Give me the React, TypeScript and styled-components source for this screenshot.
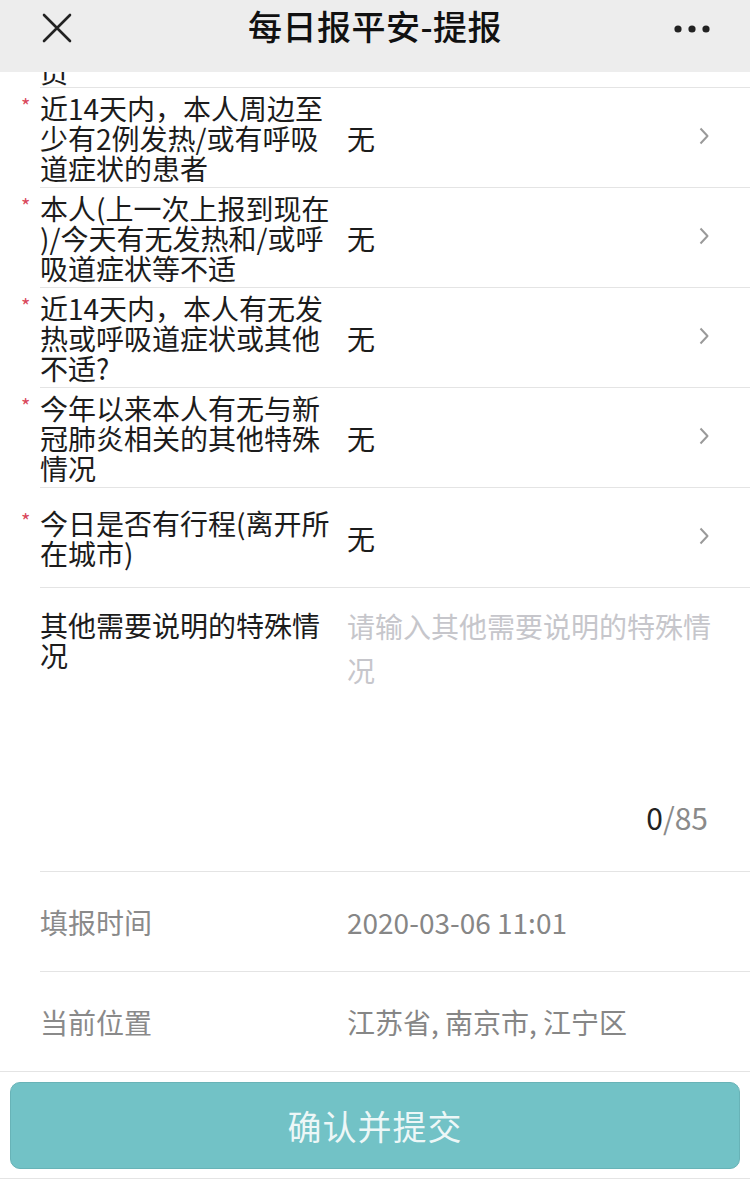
import React from 'react';
import styled, { createGlobalStyle, css } from 'styled-components';

const font = `"Noto Sans CJK SC", "Noto Sans", sans-serif`;

const GlobalStyle = createGlobalStyle`
  html, body {
    margin: 0;
    padding: 0;
    background: #ffffff;
  }
  body {
    font-family: ${font};
    color: #1c1c1c;
    -webkit-font-smoothing: antialiased;
  }
`;

interface Question {
  lines: string[];
  answer: string;
}

const questions: Question[] = [
  { lines: ['近14天内，本人周边至', '少有2例发热/或有呼吸', '道症状的患者'], answer: '无' },
  { lines: ['本人(上一次上报到现在', ')/今天有无发热和/或呼', '吸道症状等不适'], answer: '无' },
  { lines: ['近14天内，本人有无发', '热或呼吸道症状或其他', '不适?'], answer: '无' },
  { lines: ['今年以来本人有无与新', '冠肺炎相关的其他特殊', '情况'], answer: '无' },
  { lines: ['今日是否有行程(离开所', '在城市)'], answer: '无' },
];

const CloseIcon = () => (
  <svg width="30" height="30" viewBox="0 0 30 30">
    <path d="M2 2 L28 28 M28 2 L2 28" stroke="#222" strokeWidth="2.6" strokeLinecap="round" fill="none" />
  </svg>
);

const MoreIcon = () => (
  <svg width="36" height="10" viewBox="0 0 36 10">
    <circle cx="4" cy="5" r="3.6" fill="#222" />
    <circle cx="18" cy="5" r="3.6" fill="#222" />
    <circle cx="32" cy="5" r="3.6" fill="#222" />
  </svg>
);

const Chevron = () => (
  <svg width="10" height="18" viewBox="0 0 10 18">
    <path d="M1.5 1.5 L8.5 9 L1.5 16.5" stroke="#9a9a9a" strokeWidth="2" fill="none" strokeLinejoin="round" />
  </svg>
);

export default function App() {
  return (
    <Page>
      <GlobalStyle />
      <Header>
        <CloseButton>
          <CloseIcon />
        </CloseButton>
        <Title>每日报平安-提报</Title>
        <MoreButton>
          <MoreIcon />
        </MoreButton>
      </Header>

      <ScrolledEdge>
        <EdgeText>员</EdgeText>
      </ScrolledEdge>

      {questions.map((q) => (
        <Row key={q.lines[0]}>
          <Body>
            <Label>
              <Star>*</Star>
              {q.lines.map((line) => (
                <LabelLine key={line}>{line}</LabelLine>
              ))}
            </Label>
            <Value>{q.answer}</Value>
            <Arrow>
              <Chevron />
            </Arrow>
          </Body>
        </Row>
      ))}

      <Row>
        <NoteBody>
          <NoteTop>
            <Label>
              <LabelLine>其他需要说明的特殊情</LabelLine>
              <LabelLine>况</LabelLine>
            </Label>
            <Placeholder>
              请输入其他需要说明的特殊情
              <br />
              况
            </Placeholder>
          </NoteTop>
          <Counter>
            <CounterNow>0</CounterNow>/85
          </Counter>
        </NoteBody>
      </Row>

      <Row>
        <Body>
          <Label $muted>填报时间</Label>
          <Value $muted>2020-03-06 11:01</Value>
        </Body>
      </Row>

      <Row $fullLine>
        <Body $noLine>
          <Label $muted>当前位置</Label>
          <Value $muted>江苏省, 南京市, 江宁区</Value>
        </Body>
      </Row>

      <Footer>
        <SubmitButton type="button">确认并提交</SubmitButton>
      </Footer>
    </Page>
  );
}

const Page = styled.div`
  width: 750px;
  min-height: 1183px;
  background: #ffffff;
`;

const Header = styled.header`
  height: 72px;
  background: #ededed;
  display: flex;
  align-items: center;
  justify-content: space-between;
  padding: 0 40px 0 42px;
  box-sizing: border-box;
`;

const CloseButton = styled.div`
  width: 30px;
  height: 30px;
  display: flex;
  margin-top: -17px;
`;

const Title = styled.h1`
  margin: 0;
  font-family: ${font};
  font-size: 34px;
  font-weight: 500;
  color: #111;
  letter-spacing: 0.5px;
  margin-top: -22px;
  margin-left: 4px;
`;

const MoreButton = styled.div`
  display: flex;
  margin-top: -14px;
`;

const ScrolledEdge = styled.div`
  height: 15px;
  overflow: hidden;
  margin-left: 40px;
  border-bottom: 1px solid #e4e4e4;
`;

const EdgeText = styled.div`
  font-size: 28px;
  line-height: 30px;
  margin-top: -16px;
  color: #1c1c1c;
`;

const Row = styled.div<{ $fullLine?: boolean }>`
  padding-left: 40px;
  ${(p) =>
    p.$fullLine &&
    css`
      border-bottom: 1px solid #e4e4e4;
    `}
`;

const Body = styled.div<{ $noLine?: boolean }>`
  min-height: 99px;
  display: flex;
  align-items: center;
  padding-right: 40px;
  border-bottom: ${(p) => (p.$noLine ? 'none' : '1px solid #e4e4e4')};
  box-sizing: content-box;
`;

const Label = styled.div<{ $muted?: boolean }>`
  position: relative;
  width: 307px;
  flex-shrink: 0;
  font-size: 28px;
  line-height: 30px;
  color: ${(p) => (p.$muted ? '#8a8a8a' : '#1c1c1c')};
`;

const LabelLine = styled.div`
  white-space: nowrap;
`;

const Star = styled.span`
  position: absolute;
  left: -19px;
  top: 3px;
  font-size: 20px;
  line-height: 20px;
  color: #d9475a;
`;

const Value = styled.div<{ $muted?: boolean }>`
  flex: 1;
  font-size: 28px;
  line-height: 30px;
  color: ${(p) => (p.$muted ? '#868686' : '#1c1c1c')};
  white-space: nowrap;
`;

const Arrow = styled.div`
  display: flex;
  margin-right: 1px;
  margin-top: -4px;
`;

const NoteBody = styled.div`
  height: 284px;
  display: flex;
  flex-direction: column;
  justify-content: space-between;
  padding: 22px 42px 36px 0;
  box-sizing: border-box;
  border-bottom: 1px solid #e4e4e4;
`;

const NoteTop = styled.div`
  display: flex;
  align-items: flex-start;
`;

const Placeholder = styled.div`
  flex: 1;
  font-size: 28px;
  line-height: 44px;
  margin-top: -6px;
  color: #c6c6cb;
  white-space: nowrap;
`;

const Counter = styled.div`
  align-self: flex-end;
  font-family: ${font};
  font-size: 30px;
  line-height: 36px;
  color: #8a8a8a;
`;

const CounterNow = styled.span`
  color: #222;
`;

const Footer = styled.div`
  padding: 10px 10px 9px;
  border-bottom: 1px solid #e4e4e4;
`;

const SubmitButton = styled.button`
  display: block;
  width: 100%;
  height: 87px;
  border: 1px solid #68b3b7;
  border-radius: 10px;
  background: #72c2c6;
  color: rgba(255, 255, 255, 0.88);
  font-family: ${font};
  font-size: 34px;
  letter-spacing: 1px;
  padding: 0;
  cursor: pointer;
`;
